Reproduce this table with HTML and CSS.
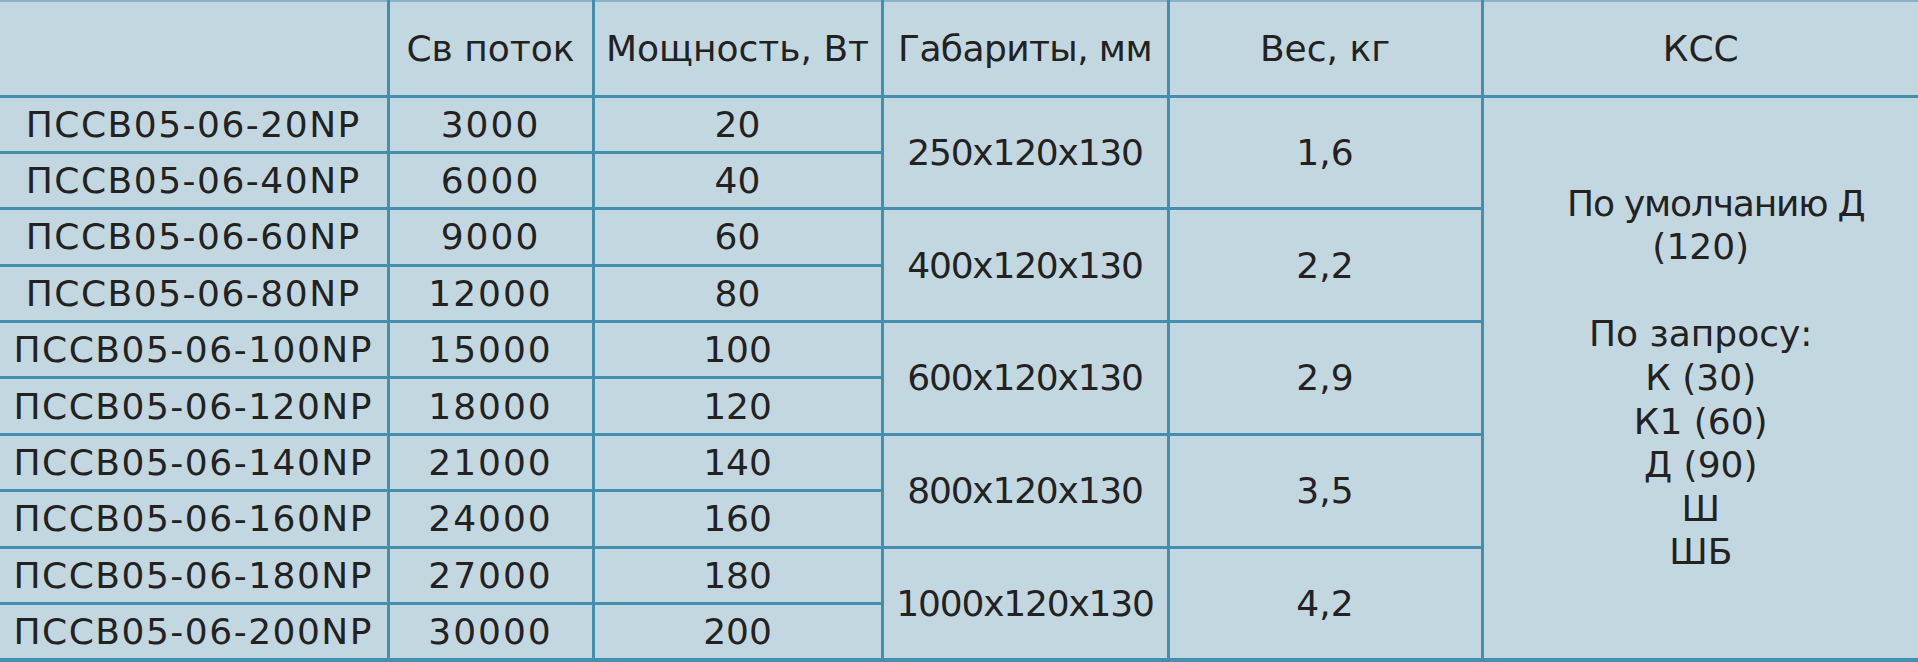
FILE: index.html
```html
<!DOCTYPE html>
<html lang="ru">
<head>
<meta charset="utf-8">
<link rel="stylesheet" href="styles.css">
</head>
<body>
<table class="spec">
  <colgroup>
    <col class="c-model">
    <col class="c-flux">
    <col class="c-power">
    <col class="c-size">
    <col class="c-weight">
    <col class="c-kss">
  </colgroup>
  <thead>
    <tr class="head">
      <th></th>
      <th>Св поток</th>
      <th>Мощность, Вт</th>
      <th class="size-h">Габариты, мм</th>
      <th>Вес, кг</th>
      <th>КСС</th>
    </tr>
  </thead>
  <tbody>
    <tr><td class="model">ПССВ05-06-20NP</td><td class="flux">3000</td><td>20</td><td rowspan="2" class="size">250x120x130</td><td rowspan="2">1,6</td>
      <td rowspan="10" class="kss"><span class="kss-first">По умолчанию Д</span><br>(120)<br><br>По запросу:<br>К (30)<br>К1 (60)<br>Д (90)<br>Ш<br>ШБ</td></tr>
    <tr><td class="model">ПССВ05-06-40NP</td><td class="flux">6000</td><td>40</td></tr>
    <tr><td class="model">ПССВ05-06-60NP</td><td class="flux">9000</td><td>60</td><td rowspan="2" class="size">400x120x130</td><td rowspan="2">2,2</td></tr>
    <tr><td class="model">ПССВ05-06-80NP</td><td class="flux">12000</td><td>80</td></tr>
    <tr><td class="model">ПССВ05-06-100NP</td><td class="flux">15000</td><td>100</td><td rowspan="2" class="size">600x120x130</td><td rowspan="2">2,9</td></tr>
    <tr><td class="model">ПССВ05-06-120NP</td><td class="flux">18000</td><td>120</td></tr>
    <tr><td class="model">ПССВ05-06-140NP</td><td class="flux">21000</td><td>140</td><td rowspan="2" class="size">800x120x130</td><td rowspan="2">3,5</td></tr>
    <tr><td class="model">ПССВ05-06-160NP</td><td class="flux">24000</td><td>160</td></tr>
    <tr><td class="model">ПССВ05-06-180NP</td><td class="flux">27000</td><td>180</td><td rowspan="2" class="size">1000x120x130</td><td rowspan="2">4,2</td></tr>
    <tr><td class="model">ПССВ05-06-200NP</td><td class="flux">30000</td><td>200</td></tr>
  </tbody>
</table>
</body>
</html>
```
FILE: styles.css
```css
html, body {
  margin: 0;
  padding: 0;
  background: #c3d7e0;
}

.spec {
  width: 1918px;
  border-collapse: collapse;
  table-layout: fixed;
  background: #c3d7e0;
  font-family: "DejaVu Sans", "Liberation Sans", sans-serif;
  font-size: 36px;
  color: #222222;
  border-top: 2px solid #86b3c8;
  border-bottom: 4px solid #458fae;
}

.c-model { width: 388px; }
.c-flux { width: 205px; }
.c-power { width: 289px; }
.c-size { width: 286px; }
.c-weight { width: 314px; }
.c-kss { width: 436px; }

.spec th,
.spec td {
  border: 3px solid #458fae;
  padding: 0;
  text-align: center;
  vertical-align: middle;
  font-weight: normal;
  white-space: nowrap;
  line-height: 1.2;
}

.spec tr > :first-child { border-left: none; }
.spec tr > .kss,
.spec .head > :last-child { border-right: none; }
.spec thead th { border-top: none; }

.head { height: 95px; }
.spec tbody tr { height: 56.4px; }
.spec tbody tr:last-child td,
.spec td.kss { border-bottom-width: 4px; }

.spec .model { letter-spacing: 1.5px; }
.spec .flux { letter-spacing: 2px; }
.spec .size { letter-spacing: -1.2px; }
.spec .size-h { letter-spacing: -0.6px; }

.spec td.kss {
  line-height: 43.6px;
  white-space: normal;
}

.kss-first {
  display: inline-block;
  letter-spacing: -1.2px;
  padding-left: 30px;
}
```
